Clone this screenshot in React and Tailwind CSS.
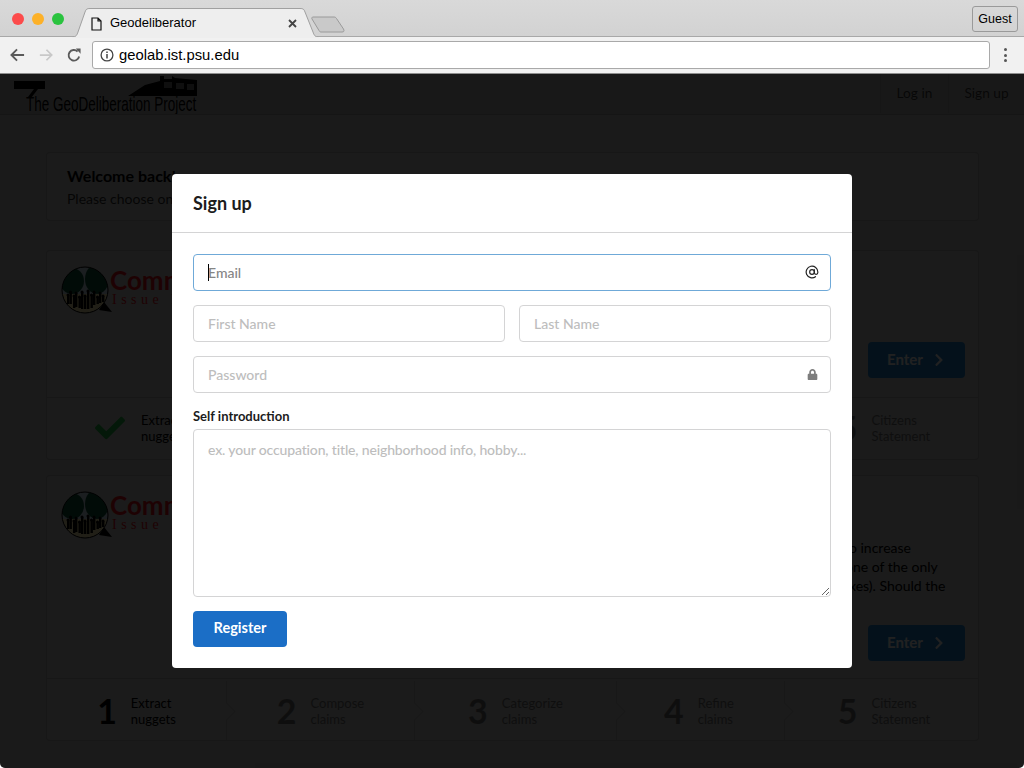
import { AtSign } from "lucide-react";
import { FaLock, FaCheck, FaChevronRight } from "react-icons/fa";

const steps = [
  { n: "1", a: "Extract", b: "nuggets", w: "w-[180px]", on: true },
  { n: "2", a: "Compose", b: "claims", w: "w-[188px]" },
  { n: "3", a: "Categorize", b: "claims", w: "w-[202px]" },
  { n: "4", a: "Refine", b: "claims", w: "w-[168px] pr-[3px]" },
  { n: "5", a: "Citizens", b: "Statement", w: "flex-1 pl-[5px]" },
];

// little crowd in the community logo: [x, top of head, height]
const people = [
  [6, 29, 9], [8.5, 26, 12], [12, 30, 12], [14, 27, 14], [17.5, 31, 11], [20, 26, 17],
  [23, 30, 13], [26, 25, 18], [29.5, 29, 13], [32, 26, 13], [35.5, 31, 7], [38, 27, 10], [41, 30, 6],
];

function TabStrip() {
  return (
    <div className="relative h-[37px] bg-gradient-to-b from-[#d9d9d9] to-[#d2d2d2] border-b border-[#a8a8a8] flex items-start">
      <div className="flex gap-[8px] pl-[12px] pt-[13px]">
        <span className="w-3 h-3 rounded-full bg-[#fc4b4b]" />
        <span className="w-3 h-3 rounded-full bg-[#fdb128]" />
        <span className="w-3 h-3 rounded-full bg-[#2ac33f]" />
      </div>
      {/* tab + new tab shapes */}
      <svg className="absolute left-[70px] top-[7px]" width="280" height="31" viewBox="0 0 280 31">
        <path d="M2 30.5 C6 30 7 28 8 25 L15 5 C16 2 17 1.5 20 1.5 L230 1.5 C233 1.5 234 2 235 5 L243 25 C244 28 245 30 249 30.5 Z" fill="#eeeeee" stroke="#a0a0a0" />
        <path d="M2 31 L249 31" stroke="#eeeeee" strokeWidth="2" />
        <path d="M243 10 L264 10 C265 10 266 10.5 266.5 11.5 L273.5 22 C274.5 24 274 25 272 25 L251 25 C250 25 249.5 24.5 249 23.5 L242 12 C241.5 11 242 10 243 10 Z" fill="#c9c9c9" stroke="#9a9a9a" />
      </svg>
      <svg className="absolute left-[91px] top-[17px]" width="11" height="14" viewBox="0 0 11 14" fill="none" stroke="#111" strokeWidth="1.2">
        <path d="M1 1 H7 L10 4 V13 H1 Z M7 1 V4 H10" />
      </svg>
      <span className="absolute left-[110px] top-[14px] text-[13px] leading-[17px] text-black">Geodeliberator</span>
      <svg className="absolute left-[288px] top-[19px]" width="9" height="9" viewBox="0 0 9 9" stroke="#444" strokeWidth="1.8">
        <path d="M1 1 L8 8 M8 1 L1 8" />
      </svg>
      <div className="absolute left-[972px] top-[6px] w-[46px] h-[26px] flex items-center justify-center border border-[#9a9a9a] rounded-[3px] text-[12.5px] text-black">
        Guest
      </div>
    </div>
  );
}

function AddressBar() {
  return (
    <div className="h-[37px] bg-[#f1f1f1] border-b border-[#8e8e8e] flex items-center">
      <div className="flex items-center gap-[14px] pl-[10px] w-[92px]">
        <svg width="15" height="14" viewBox="0 0 16 14" fill="none" stroke="#5a5a5a" strokeWidth="2">
          <path d="M15 7 H2 M7.5 1 L1.5 7 L7.5 13" />
        </svg>
        <svg width="14" height="14" viewBox="0 0 16 14" fill="none" stroke="#c8c8c8" strokeWidth="2">
          <path d="M1 7 H14 M8.5 1 L14.5 7 L8.5 13" />
        </svg>
        <svg width="14" height="15" viewBox="0 0 15 15" fill="none" stroke="#5a5a5a" strokeWidth="2">
          <path d="M13 8.5 A5.7 5.7 0 1 1 11.4 3.2" />
          <path d="M9.5 0 H14.5 V5.5 Z" fill="#5a5a5a" stroke="none" />
        </svg>
      </div>
      <div className="w-[898px] h-[28px] bg-white border border-[#a9a9a9] rounded-[3px] flex items-center pl-[7px] gap-[5px]">
        <svg width="14" height="14" viewBox="0 0 14 14" fill="none" stroke="#444" strokeWidth="1.3">
          <circle cx="7" cy="7" r="5.9" />
          <path d="M7 6 V10.5 M7 3.4 V5" strokeWidth="1.5" />
        </svg>
        <span className="text-[14.8px] text-black">geolab.ist.psu.edu</span>
      </div>
      <div className="ml-[14px] flex flex-col gap-[2.5px]">
        <span className="w-[3px] h-[3px] rounded-full bg-[#555]" />
        <span className="w-[3px] h-[3px] rounded-full bg-[#555]" />
        <span className="w-[3px] h-[3px] rounded-full bg-[#555]" />
      </div>
    </div>
  );
}

function SiteLogo() {
  return (
    <svg width="186" height="40" viewBox="0 0 186 40">
      <rect x="0" y="7" width="31" height="8" fill="#000" />
      <path d="M20 15 L14 23 L17 24 L24 15 Z" fill="#000" />
      {/* building */}
      <path d="M114 22 L131 11 L146 7 L146 2 L150 2 L150 5 L158 5 L158 2 L161 4 L183 6 L183 22 Z" fill="#000" />
      <path d="M150 8 H158 V14 H150 Z M162 9 H170 V15 H162 Z M173 10 H180 V16 H173 Z" fill="#777" />
      <text transform="translate(12 36.5) scale(0.675 1)" fontFamily="Liberation Sans" fontSize="20" fill="#000">
        The GeoDeliberation Project
      </text>
    </svg>
  );
}

function BubbleLogo() {
  return (
    <div className="flex items-start">
      <svg width="52" height="50" viewBox="0 0 52 50">
        <defs>
          <clipPath id="bubble">
            <circle cx="24" cy="24" r="23" />
          </clipPath>
        </defs>
        <g clipPath="url(#bubble)">
          <rect width="48" height="48" fill="#cfe2f2" />
          <rect y="28" width="48" height="20" fill="#fff0b0" />
          <ellipse cx="11" cy="15" rx="12" ry="13" fill="#0f5a3c" />
          <ellipse cx="36" cy="13" rx="12" ry="15" fill="#0f5a3c" />
          {people.map(([x, y, h]) => (
            <g key={x} fill="#000">
              <circle cx={x + 1} cy={y} r="1.5" />
              <rect x={x} y={y} width="2.4" height={h} />
            </g>
          ))}
        </g>
        <circle cx="24" cy="24" r="23" fill="none" stroke="#000" strokeWidth="1" />
        <path d="M43 36 L51 46 L38 44 Z" fill="#000" />
      </svg>
      <div className="ml-[-3px] mt-[-1px]">
        <div className="text-[26px] leading-[30px] font-bold text-[#e8141c] whitespace-nowrap">Community</div>
        <div className="ml-[2px] text-[14px] leading-[10px] tracking-[4.5px] text-[#e8141c] font-['Liberation_Serif',serif] whitespace-nowrap">Issue Review</div>
      </div>
    </div>
  );
}

function Steps({ checked }) {
  return (
    <div className={`h-[62px] flex border-t border-black/15 ${checked ? "pb-[2px]" : "pt-[2px]"}`}>
      {steps.map((s, i) => (
        <div key={s.n} className={`${s.w} relative flex items-center justify-center ${i < 4 ? "border-r border-black/10" : ""}`}>
          <div className={`flex items-center gap-[14px] ${s.on || (checked && i === 0) ? "" : "opacity-45"} ${checked && i === 0 ? "pl-[8px]" : ""}`}>
            {checked && i === 0 ? (
              <FaCheck className="text-[#21ba45] text-[30px] mr-[2px]" />
            ) : (
              <span className="text-[34px] leading-[34px] font-bold text-black">{s.n}</span>
            )}
            <div className="text-[13px] leading-[16px] text-black">
              <div>{s.a}</div>
              <div>{s.b}</div>
            </div>
          </div>
          {i < 4 && (
            <span className="absolute right-[-7px] top-[24px] w-[13px] h-[13px] rotate-45 bg-[#cecece] border-t border-r border-black/10" />
          )}
        </div>
      ))}
    </div>
  );
}

function ProjectCard({ height, lines, checked, enterPos }) {
  return (
    <div className="border border-black/15 rounded-[4px] bg-[#cecece]">
      <div className={`relative ${height} flex flex-col px-[14px] pt-[15px]`}>
        <BubbleLogo />
        {lines && (
          <div className="-mt-[3px] text-[14px] leading-[19px] text-black whitespace-nowrap">
            {lines.map((l) => (
              <div key={l.t} className={l.pad}>{l.t}</div>
            ))}
          </div>
        )}
        <div className={`absolute right-[13px] ${enterPos} w-[97px] h-[36px] pb-[1px] rounded-[4px] bg-[#2185d0] text-white text-[15px] font-bold flex items-center justify-center gap-[9px]`}>
          Enter
          <FaChevronRight className="text-[14px]" />
        </div>
      </div>
      <Steps checked={checked} />
    </div>
  );
}

function Page() {
  return (
    <div className="h-full bg-[#c4c4c4] text-black">
      <div className="h-[41px] bg-[#bcbcbc] border-b border-black/15 flex items-center justify-between pl-[14px]">
        <SiteLogo />
        <div className="flex h-full pb-[1px] text-[13.7px] text-black/70">
          <div className="w-[68px] flex items-center justify-center border-l border-black/10">Log in</div>
          <div className="w-[76px] flex items-center justify-center border-l border-black/10">Sign up</div>
        </div>
      </div>
      <div className="w-[933px] ml-[46px] mt-[37px] flex flex-col">
        <div className="h-[69px] border border-black/15 rounded-[4px] bg-[#cecece] px-[20px] pt-[13px]">
          <div className="text-[16px] leading-[20px] font-bold">Welcome back!</div>
          <div className="text-[14px] leading-[20px] mt-[3px] text-black/80">Please choose one</div>
        </div>
        <div className="mt-[29px]">
          <ProjectCard height="h-[146px]" enterPos="bottom-[19px]" checked />
        </div>
        <div className="mt-[15px]">
          <ProjectCard
            height="h-[202px]"
            enterPos="bottom-[17px]"
            lines={[
              { t: "to increase", pad: "pl-[783px]" },
              { t: "one of the only", pad: "pl-[784px]" },
              { t: "taxes). Should the", pad: "pl-[776px]" },
            ]}
          />
        </div>
      </div>
    </div>
  );
}

function SignUp() {
  const field = "w-full h-full rounded-[4px] border border-[#d4d4d5] bg-white px-[14px] text-[14px] text-black outline-none placeholder:text-[#bdbdbd] font-medium";
  return (
    <div className="w-[680px] h-[494px] mx-auto mt-[100px] bg-white rounded-[4px] text-[#1c1c1c]">
      <div className="h-[59px] border-b border-[#d4d4d5] flex items-center pl-[21px] text-[18px] font-bold">Sign up</div>
      <div className="pt-[21px] px-[21px] flex flex-col">
        <div className="relative h-[37px]">
          <input placeholder="Email" className="w-full h-full rounded-[4px] border border-[#6fa9d8] bg-white px-[14px] text-[14px] outline-none placeholder:text-[#858585] font-medium" />
          <span className="absolute left-[15px] top-[10px] w-px h-[17px] bg-black" />
          <AtSign size={14} strokeWidth={2} className="absolute right-[12px] top-[11px] text-[#222]" />
        </div>
        <div className="mt-[14px] h-[37px] flex gap-[14px]">
          <div className="flex-1"><input placeholder="First Name" className={field} /></div>
          <div className="flex-1"><input placeholder="Last Name" className={field} /></div>
        </div>
        <div className="relative mt-[14px] h-[37px]">
          <input placeholder="Password" className={field} />
          <FaLock className="absolute right-[13px] top-[13px] text-[11px] text-[#7d7d7d]" />
        </div>
        <div className="mt-[15px] text-[13px] leading-[16px] font-bold text-[#1c1c1c]">Self introduction</div>
        <textarea
          placeholder="ex. your occupation, title, neighborhood info, hobby..."
          className="mt-[5px] w-full h-[168px] rounded-[4px] border border-[#d4d4d5] bg-white px-[14px] py-[10px] text-[14px] leading-[20px] tracking-[-0.15px] outline-none placeholder:text-[#bdbdbd] font-medium block"
        />
        <div className="mt-[14px] w-[94px] h-[36px] pb-[2px] rounded-[4px] bg-[#1b6ec6] text-white text-[14.5px] font-bold flex items-center justify-center">
          Register
        </div>
      </div>
    </div>
  );
}

export default function App() {
  return (
    <div className="w-[1024px] h-[768px] overflow-hidden flex flex-col bg-white font-['Liberation_Sans',Arial,sans-serif]">
      <TabStrip />
      <AddressBar />
      <div className="relative flex-1 overflow-hidden rounded-b-[5px] font-[Lato,sans-serif]">
        <Page />
        <div className="absolute inset-0 bg-black/87">
          <SignUp />
        </div>
      </div>
    </div>
  );
}
